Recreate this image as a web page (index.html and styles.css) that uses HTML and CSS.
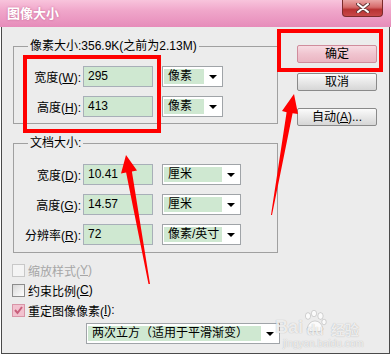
FILE: index.html
```html
<!DOCTYPE html>
<html lang="zh-CN">
<head>
<meta charset="UTF-8">
<title>图像大小</title>
<link rel="stylesheet" href="styles.css">
</head>
<body>

<div class="titlebar">
  <span class="title">图像大小</span>
  <span class="close">
    <svg width="14" height="10" viewBox="0 0 14 10">
      <path d="M2 1 L12 9 M12 1 L2 9" stroke="#6a3a3a" stroke-width="4" stroke-linecap="round"/>
      <path d="M2 1 L12 9 M12 1 L2 9" stroke="#fff" stroke-width="2" stroke-linecap="round"/>
    </svg>
  </span>
</div>

<div class="dialog">
  <div class="main">
    <fieldset class="group pixel">
      <legend>像素大小:356.9K(之前为2.13M)</legend>
      <div class="row">
        <label>宽度(<u>W</u>):</label>
        <span class="field">295</span>
        <span class="unit short"><span class="unit-text">像素</span><span class="caret"></span></span>
      </div>
      <div class="row">
        <label>高度(<u>H</u>):</label>
        <span class="field">413</span>
        <span class="unit short"><span class="unit-text">像素</span><span class="caret"></span></span>
      </div>
    </fieldset>

    <fieldset class="group doc">
      <legend>文档大小:</legend>
      <div class="row">
        <label>宽度(<u>D</u>):</label>
        <span class="field">10.41</span>
        <span class="unit"><span class="unit-text">厘米</span><span class="caret"></span></span>
      </div>
      <div class="row">
        <label>高度(<u>G</u>):</label>
        <span class="field">14.57</span>
        <span class="unit"><span class="unit-text">厘米</span><span class="caret"></span></span>
      </div>
      <div class="row">
        <label>分辨率(<u>R</u>):</label>
        <span class="field">72</span>
        <span class="unit"><span class="unit-text">像素/英寸</span><span class="caret"></span></span>
      </div>
    </fieldset>

    <div class="check disabled"><span class="box"></span>缩放样式(<u>Y</u>)</div>
    <div class="check"><span class="box"></span>约束比例(<u>C</u>)</div>
    <div class="check on">
      <span class="box"><svg width="11" height="11" viewBox="0 0 11 11"><path d="M2 5 L4.5 8 L9 2" stroke="#c8607c" stroke-width="2" fill="none"/></svg></span>重定图像像素(<u>I</u>):
    </div>
    <div class="unit resample"><span class="unit-text">两次立方（适用于平滑渐变）</span><span class="caret"></span></div>
  </div>

  <div class="side">
    <button class="btn ok">确定</button>
    <button class="btn">取消</button>
    <button class="btn auto">自动(<u>A</u>)...</button>
  </div>
</div>

<!-- 标注 -->
<div class="mark mark-size"></div>
<div class="mark mark-ok"></div>
<svg class="arrows" width="391" height="356" viewBox="0 0 391 356">
  <polygon fill="#ff0000" points="150,284 131.9,171.4 137,170.5 126,155 121,173.5 126.1,172.6 148.5,284"/>
  <polygon fill="#ff0000" points="272,215 292.6,113.2 298,114 294,94 282,111 286.6,112.2 271,215"/>
</svg>

<div class="watermark">
  <div class="wm-logo">
    <span>Bai</span>
    <span class="wm-du"><svg class="paw" width="24" height="22" viewBox="0 0 24 22">
      <ellipse cx="5" cy="6" rx="2.6" ry="3.3"/><ellipse cx="11" cy="3.5" rx="2.6" ry="3.2"/>
      <ellipse cx="17.5" cy="6" rx="2.6" ry="3.3"/><ellipse cx="21" cy="12" rx="2.2" ry="2.8"/>
      <path d="M4 19 Q6 11 12 11 Q18 11 20 19 Q20 22 12 21.5 Q4 22 4 19 Z"/></svg>du</span>
    <span class="wm-cn">经验</span>
  </div>
  <div class="wm-url">jingyan.baidu.com</div>
</div>

</body>
</html>
```

FILE: styles.css
```css
body { margin: 0; width: 391px; height: 356px; position: relative; background: #fff; font: 12px "Liberation Sans", "Noto Sans CJK SC", sans-serif; color: #000; overflow: hidden; }

.titlebar { height: 27px; display: flex; justify-content: space-between; background: linear-gradient(#f8c4dc, #f0a6ca 40%, #e68cba); }
.title { padding: 6px 0 0 7px; font-size: 13px; font-weight: bold; color: #fff; line-height: 16px; text-shadow: 0 0 2px rgba(150, 40, 90, 0.5); }
.close { width: 41px; height: 17px; margin-right: 8px; box-sizing: border-box; border: 1px solid #7c2b2b; border-top: 0; border-radius: 0 0 4px 4px; background: linear-gradient(#eaa4a4, #d66a6a 45%, #b83232 60%, #c84848); display: flex; align-items: center; justify-content: center; }

.dialog { height: 327px; margin: 0 1px; box-sizing: border-box; border: 1px solid #4a4a4a; border-top: 0; background: #ececec; display: flex; padding: 12px 0 0 11px; }
.main { width: 265px; }

.group { width: 265px; box-sizing: border-box; margin: 0; padding: 13px 0 6px 0; border: 1px solid #a0a0a0; }
.group legend { margin-left: 14px; padding: 0 2px; line-height: 14px; }
.doc { margin-top: 12px; padding: 14px 0 7px 0; }

.row { display: flex; align-items: center; height: 21px; margin-bottom: 9px; }
.row:last-child { margin-bottom: 0; }
.row label { width: 67px; margin-right: 2px; text-align: right; }
.field { width: 70px; height: 21px; box-sizing: border-box; border: 1px solid #a8afb8; background: #cfe8d1; padding-left: 4px; line-height: 19px; }

.unit { width: 79px; height: 21px; margin-left: 9px; box-sizing: border-box; border: 1px solid #a0a4a8; background: #fff; padding: 2px 0 2px 1px; display: flex; }
.unit.short { width: 61px; }
.unit-text { flex: 1; background: #cfe8d1; padding-left: 4px; line-height: 15px; white-space: nowrap; overflow: hidden; }
.caret { width: 18px; display: flex; align-items: center; justify-content: center; }
.caret::after { content: ""; border-left: 4px solid transparent; border-right: 4px solid transparent; border-top: 4px solid #000; }

.check { display: flex; align-items: center; height: 20px; }
.check:first-of-type { margin-top: 7px; }
.check .box { width: 13px; height: 13px; box-sizing: border-box; margin: 0 3px 0 -1px; border: 1px solid #8c8c8c; background: linear-gradient(135deg, #d8d8d8, #fff); display: flex; align-items: center; justify-content: center; }
.check.disabled { color: #a6a6a6; }
.check.disabled .box { border-color: #c8c8c8; background: #f4f4f4; }
.check.on .box { border-color: #d896a8; background: #f2c2cf; }

.resample { width: 194px; margin: 3px 0 0 73px; }

.side { display: flex; flex-direction: column; margin: 6px 0 0 19px; }
.btn { width: 80px; height: 18px; margin: 0 0 10px 0; padding: 0; font: inherit; line-height: 16px; border: 1px solid #8a8a8a; border-radius: 2px; background: linear-gradient(#fbfbfb, #e8e8e8 50%, #d6d6d6); }
.btn.ok { border-color: #d08c9c; background: linear-gradient(#f7dbe2, #f0c4cf 50%, #eab5c2); }
.btn.auto { margin-top: 7px; }

.mark { position: absolute; box-sizing: border-box; border: 4px solid #ff0000; }
.mark-size { left: 23px; top: 55px; width: 138px; height: 78px; }
.mark-ok { left: 277px; top: 29px; width: 106px; height: 43px; }
.arrows { position: absolute; left: 0; top: 0; }

.watermark { position: absolute; left: 275px; top: 302px; color: rgba(255, 255, 255, 0.8); text-shadow: 0 0 1px rgba(0, 0, 0, 0.3); }
.wm-logo { display: flex; align-items: flex-end; height: 36px; font: bold 18px "Liberation Sans", sans-serif; }
.wm-du { display: flex; flex-direction: column; align-items: center; line-height: 16px; font-size: 14px; }
.paw { fill: rgba(255, 255, 255, 0.8); stroke: rgba(0, 0, 0, 0.15); margin-bottom: -10px; }
.wm-cn { font: bold 14px "Noto Sans CJK SC", sans-serif; margin-left: 4px; line-height: 18px; }
.wm-url { font: 10px "Liberation Sans", sans-serif; margin-left: 8px; line-height: 12px; }
```
